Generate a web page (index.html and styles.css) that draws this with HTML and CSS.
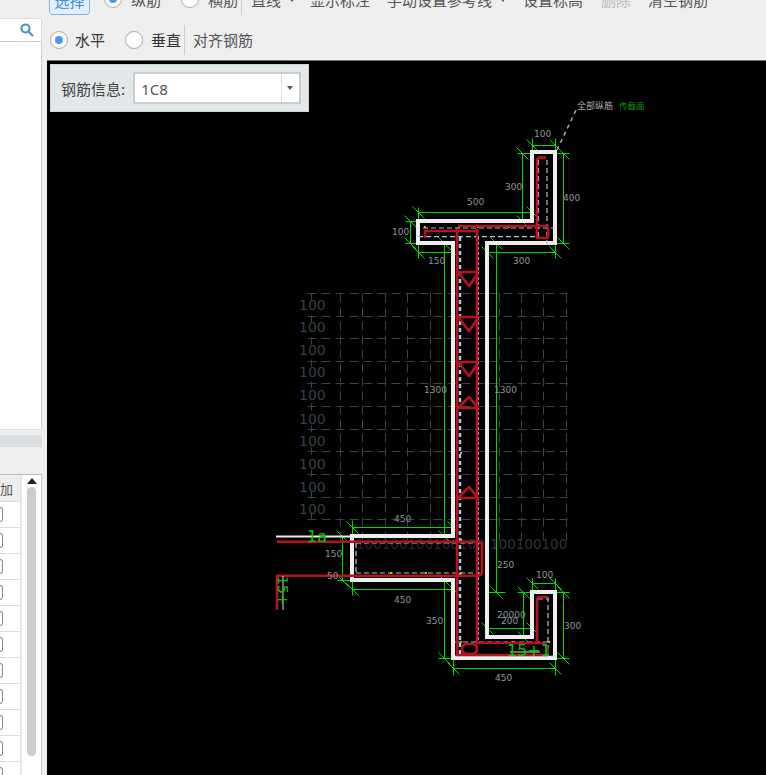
FILE: index.html
```html
<!DOCTYPE html>
<html lang="zh">
<head>
<meta charset="utf-8">
<title>钢筋</title>
<link rel="stylesheet" href="styles.css">
</head>
<body>
<div class="app">
  <aside class="side">
    <div class="side-top"></div>
    <div class="search">
      <svg class="search-icon" width="14" height="14" viewBox="0 0 14 14"><circle cx="5.5" cy="5.5" r="4"/><path d="M8.5 8.5L13 13"/></svg>
    </div>
    <div class="tree"></div>
    <div class="side-gap"></div>
    <div class="side-head"></div>
    <div class="side-tools"></div>
    <div class="table">
      <div class="cols">
        <div class="th">加</div>
        <div class="tr"><i class="chk"></i></div>
        <div class="tr"><i class="chk"></i></div>
        <div class="tr"><i class="chk"></i></div>
        <div class="tr"><i class="chk"></i></div>
        <div class="tr"><i class="chk"></i></div>
        <div class="tr"><i class="chk"></i></div>
        <div class="tr"><i class="chk"></i></div>
        <div class="tr"><i class="chk"></i></div>
        <div class="tr"><i class="chk"></i></div>
        <div class="tr"><i class="chk"></i></div>
        <div class="tr"><i class="chk"></i></div>
      </div>
      <div class="scroll">
        <span class="up"></span>
        <span class="thumb"></span>
      </div>
    </div>
  </aside>
  <main class="main">
    <div class="toolbar">
      <div class="row row-one">
        <button class="btn-sel">选择</button>
        <span class="radio on r1"></span><span class="lbl">纵筋</span>
        <span class="radio r2"></span><span class="lbl">横筋</span>
        <span class="sep s1"></span>
        <span class="lbl l-line">直线</span><span class="caret c1"></span>
        <span class="lbl l-show">显示标注</span>
        <span class="lbl l-ref">手动设置参考线</span><span class="caret c2"></span>
        <span class="lbl l-elev">设置标高</span>
        <span class="lbl l-del">删除</span>
        <span class="lbl l-clear">清空钢筋</span>
      </div>
      <div class="row row-two">
        <span class="radio on r3"></span><span class="lbl dark">水平</span>
        <span class="radio r4"></span><span class="lbl dark">垂直</span>
        <span class="sep s2"></span>
        <span class="lbl l-align">对齐钢筋</span>
      </div>
    </div>
    <div class="canvas">
      <svg class="draw" viewBox="47 61 719 714" width="719" height="714">
        <defs>
          <path id="tk" d="M-6 -6L6 6"/>
        </defs>
        <!-- dim background grid -->
        <g class="grid">
          <path d="M307 293H567M307 316H567M307 338H567M307 361H567M307 383H567M307 406H567M307 429H567M307 451H567M307 474H567M307 497H567M307 519H567"/>
          <path d="M340 293V542M362 293V542M385 293V542M407 293V542M430 293V542M499 293V542M521 293V542M543 293V542M566 293V542"/>
          <path class="grid-tick" d="M311 293V542"/>
        </g>
        <g class="grid-text">
          <text x="299" y="310">100</text><text x="299" y="332">100</text><text x="299" y="355">100</text>
          <text x="299" y="377">100</text><text x="299" y="400">100</text><text x="299" y="424">100</text>
          <text x="299" y="446">100</text><text x="299" y="469">100</text><text x="299" y="492">100</text>
          <text x="299" y="514">100</text><text class="row-text dimmer" x="356" y="549">100100100100100</text><text class="row-text" x="490" y="549">100100100</text>
        </g>

        <!-- green dimensions -->
        <g class="dim">
          <path d="M532 145H555M532 138V152M555 138V152"/>
          <path d="M563 153V243M555 153H569M555 243H569"/>
          <path d="M522 153V221M517 153H532M517 221H532"/>
          <path d="M418 212H532M418 207V221M532 207V221"/>
          <path d="M410 221V243M405 221H418M405 243H418"/>
          <path d="M418 252H453M418 243V258M453 243V258"/>
          <path d="M487 252H555M487 243V258M555 243V258"/>
          <path d="M444 243V536M496 243V592M444 536H453M487 592H505"/>
          <path d="M352 527H453M352 520V536M453 520V536"/>
          <path d="M352 589H453M352 580V595M453 580V595"/>
          <path d="M342 536V580M337 536H352M337 580H352"/>
          <path d="M444 580V658M438 658H453"/>
          <path d="M532 583H555M532 578V592M555 578V592"/>
          <path d="M563 592V658M555 592H569M555 658H569"/>
          <path d="M453 668H555M453 658V675M555 658V675"/>
          <path d="M487 628H532M487 623V637M532 623V637M523 592V637M517 592H532"/>
          <use href="#tk" x="532" y="145"/><use href="#tk" x="555" y="145"/>
          <use href="#tk" x="563" y="153"/><use href="#tk" x="563" y="243"/>
          <use href="#tk" x="522" y="153"/><use href="#tk" x="522" y="221"/>
          <use href="#tk" x="418" y="212"/><use href="#tk" x="532" y="212"/>
          <use href="#tk" x="410" y="221"/><use href="#tk" x="410" y="243"/>
          <use href="#tk" x="418" y="252"/><use href="#tk" x="453" y="252"/>
          <use href="#tk" x="487" y="252"/><use href="#tk" x="555" y="252"/>
          <use href="#tk" x="444" y="243"/><use href="#tk" x="496" y="243"/>
          <use href="#tk" x="444" y="536"/><use href="#tk" x="496" y="592"/>
          <use href="#tk" x="352" y="527"/><use href="#tk" x="453" y="527"/>
          <use href="#tk" x="352" y="589"/><use href="#tk" x="453" y="589"/>
          <use href="#tk" x="342" y="536"/><use href="#tk" x="342" y="580"/>
          <use href="#tk" x="444" y="580"/><use href="#tk" x="444" y="658"/>
          <use href="#tk" x="532" y="583"/><use href="#tk" x="555" y="583"/>
          <use href="#tk" x="563" y="592"/><use href="#tk" x="563" y="658"/>
          <use href="#tk" x="453" y="668"/><use href="#tk" x="555" y="668"/>
          <use href="#tk" x="487" y="628"/><use href="#tk" x="532" y="628"/>
          <use href="#tk" x="523" y="592"/><use href="#tk" x="523" y="637"/>
        </g>

        <!-- outline -->
        <path class="outline" d="M532 152H555V243H487V637H532V592H555V658H453V580H352V536H453V243H418V221H532Z"/>
        <path class="leader-line" d="M276 536.500H352"/>

        <!-- stirrups dashed -->
        <g class="dash">
          <path d="M538.500 160V240M547 160V245M423 228H555M418 236.700H537"/>
          <path d="M356 543H480M356 543V573M356 573H480"/>
          <path d="M455 642H550M455 656H555M548 597V655M538 599H548"/>
          <path class="fine" d="M478.300 237V642"/>
        </g>
        <path class="dash-thick" d="M460 237V655"/>

        <!-- small anchor points -->
        <path class="anchors" d="M424 227h2M458 227h2M477 227h2M508 227h2M546 227h2M460 453h2M460 642h2M512 642h2M548 642h2M460 540h2M460 573h2M390 573h2M425 573h2"/>

        <!-- red rebar -->
        <g class="rebar">
          <path d="M546 157.500H540Q537 157.500 537 161V238H546Q548 238 548 236V228Q548 226 546 226H458"/>
          <path d="M425 238V231H477"/>
          <path d="M457 229V655H547Q548 650 547 648Q546 643 541 643H477V229"/>
          <path d="M458 272H478M458 272L469 286L478 273"/>
          <path d="M458 317H478M458 317L469 331L478 318"/>
          <path d="M458 362H478M458 362L469 376L478 363"/>
          <path d="M458 408H478L469 397L458 408"/>
          <path d="M458 498H478L469 487L458 498"/>
          <path d="M277 541.700H478Q482 541.700 482 545V571Q482 575.700 477 575.700H277V610"/>
          <path d="M537 643V600Q537 597 540 597H548"/>
          <path d="M468 644H473Q477 644 477 649Q477 653 473 654H468Q462 654 462 649Q462 644 468 644Z"/>
        </g>
        <path class="leader" d="M557 150L577 108"/>

        <!-- labels -->
        <g class="num">
          <text x="534" y="137">100</text><text x="563" y="201">400</text><text x="505" y="190">300</text>
          <text x="467" y="205">500</text><text x="392" y="235">100</text><text x="428" y="264">150</text>
          <text x="513" y="264">300</text><text x="424" y="393">1300</text><text x="494" y="393">1300</text>
          <text x="394" y="522">450</text><text x="394" y="603">450</text><text x="325" y="557">150</text>
          <text x="327" y="579">50</text><text x="426" y="624">350</text><text x="497" y="568">250</text>
          <text x="536" y="578">100</text><text x="564" y="629">300</text><text x="495" y="681">450</text>
          <text x="497" y="618">20000</text><text x="501" y="624">200</text>
        </g>
        <text class="note" x="577" y="109">全部纵筋</text>
        <text class="note green" x="619" y="109">传截面</text>
        <text class="big" x="307" y="542">1a</text>
        <path class="white-thin" d="M510 652H540M283 576V610"/>
        <text class="big" x="507" y="656">15+1</text>
        <text class="big small-rot" transform="translate(278 576) rotate(90)">15+</text>
      </svg>
      <div class="info">
        <span class="info-label">钢筋信息:</span>
        <div class="select">
          <span class="select-value">1C8</span>
          <span class="select-arrow"></span>
        </div>
      </div>
    </div>
  </main>
</div>
</body>
</html>
```

FILE: styles.css
```css
* { box-sizing: border-box; }
html, body { margin: 0; height: 100%; overflow: hidden; }
body { font-family: "Noto Sans CJK SC", "Noto Sans", sans-serif; background: #eee; color: #444; }

.app { display: flex; width: 766px; height: 775px; }

/* sidebar */
.side { width: 47px; flex: none; display: flex; flex-direction: column; background: #eee; padding-right: 5px; }
.side-top { height: 18px; }
.search { height: 24px; background: #fff; border-top: 1px solid #ddd; border-bottom: 1px solid #ccc; border-right: 1px solid #ddd; display: flex; justify-content: flex-end; align-items: center; padding-right: 7px; }
.search-icon { fill: none; stroke: #3d8fc9; stroke-width: 2; }
.tree { height: 388px; background: #fff; border-right: 1px solid #ccc; border-bottom: 1px solid #ddd; }
.side-gap { height: 5px; }
.side-head { height: 12px; background: #dcdfe2; }
.side-tools { height: 28px; border-bottom: 1px solid #bbb; }
.table { flex: 1; display: flex; background: #fff; border-right: 1px solid #ccc; min-height: 0; overflow: hidden; }
.cols { width: 22px; border-right: 2px solid #e6e6e6; }
.th { height: 27px; background: #eee; border-bottom: 1px solid #ddd; font-size: 13px; line-height: 27px; color: #555; margin-left: -3px; padding-left: 3px; }
.tr { height: 26px; border-bottom: 1px solid #ddd; display: flex; align-items: center; }
.chk { display: block; width: 3px; height: 15px; border: 1px solid #888; border-left: 0; border-radius: 0 3px 3px 0; background: #fff; }
.scroll { flex: 1; display: flex; flex-direction: column; align-items: center; padding-top: 3px; }
.up { width: 0; height: 0; border-left: 5px solid transparent; border-right: 5px solid transparent; border-bottom: 6px solid #222; }
.thumb { width: 9px; height: 269px; margin-top: 3px; border-radius: 5px; background: #ccc; }

/* main */
.main { flex: 1; display: flex; flex-direction: column; min-width: 0; }
.toolbar { height: 61px; flex: none; background: #eee; border-bottom: 1px solid #777; overflow: hidden; }
.row { display: flex; align-items: center; height: 24px; }
.row-one { margin-top: -12px; padding-left: 2px; }
.row-two { margin-top: 16px; padding-left: 3px; }
.lbl { font-size: 15px; line-height: 24px; white-space: nowrap; color: #555; }
.lbl.dark { color: #333; }
.btn-sel { width: 41px; height: 30px; margin: 0; padding: 0; border: 1px solid #79b4ec; border-radius: 4px; background: #e3f0fc; color: #3f8fdc; font: 15px "Noto Sans CJK SC", sans-serif; flex: none; }
.radio { width: 18px; height: 18px; flex: none; border: 1px solid #aaa; border-radius: 50%; background: #fff; margin-right: 9px; position: relative; }
.radio.on::after { content: ""; position: absolute; left: 4px; top: 4px; width: 8px; height: 8px; border-radius: 50%; background: #4a9bf0; }
.r1 { margin-left: 14px; margin-bottom: 3px; }
.r2 { margin-left: 20px; margin-bottom: 3px; }
.r3 { margin-right: 7px; }
.r4 { margin-left: 20px; margin-right: 8px; }
.sep { width: 1px; height: 30px; background: #ccc; flex: none; }
.s1 { margin-left: 3px; }
.s2 { margin-left: 3px; }
.l-line { margin-left: 9px; }
.caret { width: 0; height: 0; border-left: 3px solid transparent; border-right: 3px solid transparent; border-top: 4px solid #555; flex: none; }
.c1 { margin-left: 8px; }
.c2 { margin-left: 8px; }
.l-show { margin-left: 15px; }
.l-ref { margin-left: 17px; }
.l-elev { margin-left: 17px; }
.l-del { margin-left: 18px; color: #bbb; }
.l-clear { margin-left: 17px; }
.l-align { margin-left: 8px; color: #555; }

/* canvas */
.canvas { flex: 1; position: relative; background: #000; overflow: hidden; min-height: 0; }
.draw { display: block; }
.info { position: absolute; left: 3px; top: 3px; width: 259px; height: 48px; background: #e2e8ea; border: 1px solid #cfd5d8; display: flex; align-items: center; padding-left: 10px; gap: 8px; }
.info-label { font-size: 15px; color: #444; }
.select { width: 168px; height: 32px; background: #fff; border: 2px solid #ccc; display: flex; align-items: center; justify-content: space-between; }
.select-value { font-family: "Noto Sans", sans-serif; font-size: 15px; color: #555; padding: 2px 0 0 6px; }
.select-arrow { width: 18px; height: 100%; border-left: 1px solid #ddd; position: relative; }
.select-arrow::after { content: ""; position: absolute; left: 5px; top: 12px; border-left: 3px solid transparent; border-right: 3px solid transparent; border-top: 4px solid #555; }

/* drawing */
.draw path, .draw use { fill: none; }
.grid { transform: translate(0.5px, 0.5px); }
.grid path { stroke: #36424e; stroke-width: 1; stroke-dasharray: 9 5; }
.grid .grid-tick { stroke-dasharray: 7 15; }
.grid-text text { fill: #36414b; font: 14px "DejaVu Sans", sans-serif; }
.grid-text .row-text { fill: #2c363f; font-size: 13.500px; }
.grid-text .dimmer { fill: #232b32; }
.dim { stroke: #00dc00; stroke-width: 1; transform: translate(0.5px, 0.5px); }
.outline { stroke: #eeeeee; stroke-width: 4; stroke-linejoin: miter; }
.leader-line { stroke: #eee; stroke-width: 2; }
.dash path { stroke: #a9c4dc; stroke-width: 1.200; stroke-dasharray: 5 3; }
.dash .fine { stroke: #b8d0e6; stroke-dasharray: 3 2; }
.dash-thick { stroke: #a9cbe8; stroke-width: 2.500; stroke-dasharray: 4 3; }
.anchors { stroke: #e0b020; stroke-width: 2; }
.rebar path { stroke: #b5141e; stroke-width: 2.600; stroke-linejoin: round; }
.leader { stroke: #aaa; stroke-width: 1.500; stroke-dasharray: 4 4; }
.num text { fill: #8f979d; font: 9px "DejaVu Sans", sans-serif; }
.note { fill: #aaa; font: 9px "Noto Sans CJK SC", sans-serif; }
.note.green { fill: #0a9a0a; font-size: 8.500px; }
.big { fill: #00c800; font: 16px "DejaVu Sans", sans-serif; }
.big.small-rot { font-size: 14px; }
.white-thin { stroke: #ddd; stroke-width: 1; }
```
